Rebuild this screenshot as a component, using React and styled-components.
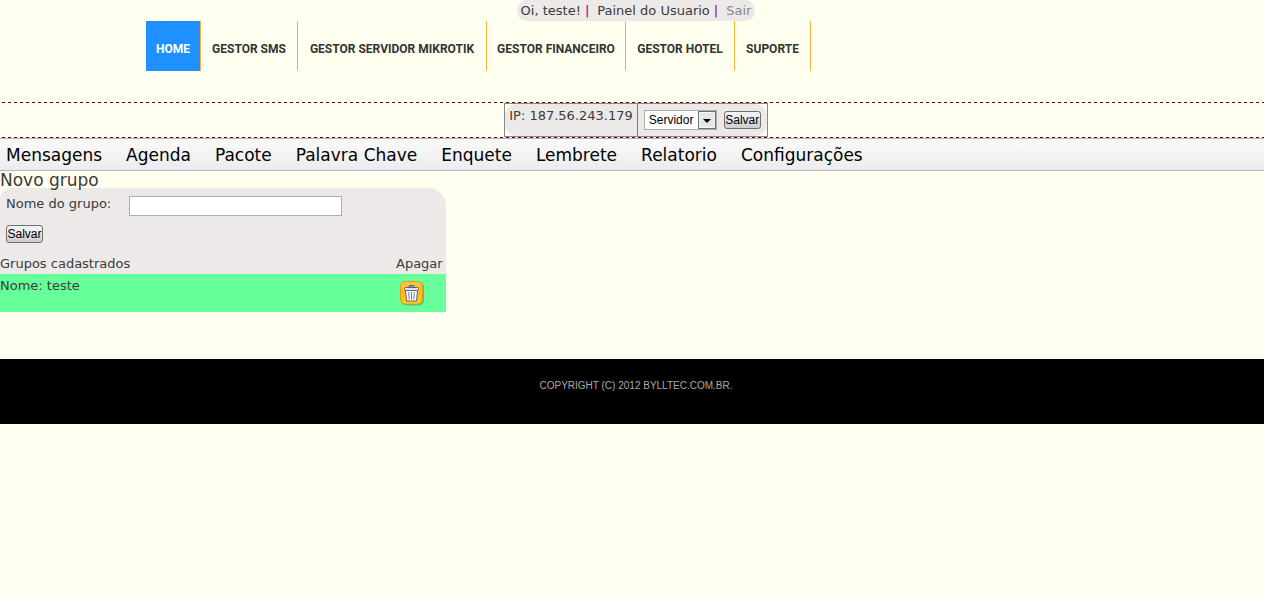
import React, { useState } from 'react';
import styled, { createGlobalStyle } from 'styled-components';

const GlobalStyle = createGlobalStyle`
  * {
    box-sizing: border-box;
  }

  body {
    margin: 0;
    background: #fffff0;
    color: #3b3b3b;
    font: 13px/16px Verdana, 'DejaVu Sans', sans-serif;
  }

  a {
    color: inherit;
    text-decoration: none;
  }
`;

const UserRow = styled.div`
  display: flex;
  justify-content: center;
  padding-left: 8px;
`;

const UserBar = styled.div`
  display: flex;
  height: 21px;
  padding: 0 4px;
  line-height: 21px;
  white-space: pre;
  background: #ede9e9;
  border-radius: 10px;
`;

const Separator = styled.span`
  padding: 0 8px 0 4px;
  color: #800080;
`;

const LogoutLink = styled.a`
  color: #888;
`;

const MainNav = styled.nav`
  display: grid;
  grid-template-columns: 55px 97px 189px 139px 109px 76px;
  padding-left: 146px;
  margin-bottom: 31px;
`;

const MainNavLink = styled.a`
  height: 50px;
  padding-top: 4px;
  border-right: 1px solid #fbb03b;
  background: ${({ $active }) => ($active ? '#1e90ff' : 'transparent')};
  color: ${({ $active }) => ($active ? '#fff' : '#333')};
  font: bold 12px/48px Roboto, sans-serif;
  text-align: center;
  white-space: nowrap;
  text-transform: uppercase;
`;

const dashes = 'repeating-linear-gradient(90deg, transparent 0 2px, #600 2px 5px, transparent 5px 6px)';

const ServerStrip = styled.div`
  display: flex;
  justify-content: center;
  padding: 1px 0 1px 8px;
  background: ${dashes} top / 100% 1px no-repeat, ${dashes} bottom / 100% 1px no-repeat;
`;

const ServerBox = styled.div`
  display: flex;
  height: 34px;
  border: 1px solid #888;
  background: #fffff0;
`;

const ServerInner = styled.div`
  display: flex;
  border-radius: 12px;
  background: #ede9e9;
`;

const IpAddress = styled.div`
  padding: 4px 4px 0;
  border-right: 1px solid #777;
`;

const ServerForm = styled.form`
  display: flex;
  align-items: center;
  gap: 7px;
  padding: 0 6px;
`;

const SelectWrap = styled.span`
  display: grid;
  grid-template-columns: 1fr 18px;
  width: 73px;
  height: 20px;
  border: 1px solid #abadb3;
  background: #fff;

  select {
    grid-area: 1 / 1 / 2 / 3;
    padding: 0 0 0 4px;
    border: 0;
    appearance: none;
    background: transparent;
    color: #000;
    font: 12px 'Liberation Sans', Arial, sans-serif;
  }

  svg {
    grid-area: 1 / 2;
    pointer-events: none;
  }
`;

const Button = styled.button`
  display: flex;
  align-items: center;
  justify-content: center;
  width: 37px;
  height: 18px;
  padding: 0;
  overflow: hidden;
  border: 1px solid #707070;
  border-radius: 3px;
  background: linear-gradient(#f2f2f2 0%, #ebebeb 50%, #ddd 50%, #cfcfcf 100%);
  color: #000;
  font: 12px 'Liberation Sans', Arial, sans-serif;
`;

const SubMenu = styled.nav`
  display: flex;
  gap: 24px;
  height: 33px;
  padding-left: 6px;
  border: solid #b4b4c4;
  border-width: 1px 0;
  background: linear-gradient(#fafafa, #ececee);
  color: #000;
  font-size: 17px;
  line-height: 32px;
`;

const Title = styled.h1`
  height: 17px;
  margin: 0;
  font-size: 17px;
  font-weight: normal;
  line-height: 19px;
`;

const GroupPanel = styled.section`
  width: 446px;
  max-width: 100%;
  margin-bottom: 47px;
  border-radius: 12px 18px 0 0;
  background: #ede9e9;
`;

const GroupForm = styled.form`
  display: grid;
  grid-template-columns: 123px 1fr;
  row-gap: 9px;
  justify-items: start;
  padding: 8px 6px 13px;

  input {
    width: 213px;
    height: 20px;
    padding: 0 3px;
    border: 1px solid #abadb3;
    background: #fff;
    font: 12px 'Liberation Sans', Arial, sans-serif;
  }
`;

const GroupTable = styled.table`
  width: 100%;
  border-collapse: collapse;

  th,
  td {
    padding: 0;
    font-weight: normal;
    text-align: left;
    vertical-align: top;
  }

  th {
    height: 18px;
  }

  th:last-child,
  td:last-child {
    width: 50px;
  }

  tbody td {
    height: 38px;
    padding-top: 4px;
    background: #6f9;
  }
`;

const DeleteButton = styled.button`
  display: block;
  margin: 2px 0 0 3px;
  padding: 0;
  border: 0;
  background: none;

  svg {
    display: block;
  }
`;

const Footer = styled.footer`
  height: 65px;
  padding: 18px 0 0 8px;
  background: #000;
  color: #aaa;
  font: 10px/18px 'Liberation Sans', Arial, sans-serif;
  text-align: center;
  text-transform: uppercase;
`;

const mainLinks = ['Home', 'Gestor SMS', 'Gestor Servidor Mikrotik', 'Gestor Financeiro', 'Gestor Hotel', 'Suporte'];
const subLinks = ['Mensagens', 'Agenda', 'Pacote', 'Palavra Chave', 'Enquete', 'Lembrete', 'Relatorio', 'Configurações'];

function SelectArrow() {
  return (
    <svg width="18" height="18" viewBox="0 0 18 18">
      <rect x="0.5" y="0.5" width="17" height="17" fill="#e6e6e6" stroke="#707070" />
      <rect x="1.5" y="1.5" width="15" height="15" fill="none" stroke="#f6f6f6" />
      <path d="M5 8h8l-4 4z" fill="#000" />
    </svg>
  );
}

function TrashIcon() {
  return (
    <svg width="26" height="26" viewBox="0 0 26 26">
      <defs>
        <linearGradient id="trash-bg" x1="0" y1="0" x2="0" y2="1">
          <stop offset="0" stopColor="#ffc84a" />
          <stop offset="0.5" stopColor="#ffb51b" />
          <stop offset="1" stopColor="#ffd11f" />
        </linearGradient>
      </defs>
      <rect x="2" y="2" width="23" height="23.5" rx="5" fill="#3f8f50" opacity="0.5" />
      <rect x="1.5" y="1.5" width="22" height="22.5" rx="5" fill="url(#trash-bg)" stroke="#e99a12" />
      <path d="M9.5 7.5l1-2h4l1 2" fill="#8d94ad" stroke="#5b6280" />
      <path d="M6.5 10.5h12l-1 10.5h-10z" fill="#fff" stroke="#5b6280" />
      <rect x="5.5" y="7.5" width="14" height="3" rx="1" fill="#dfe2ec" stroke="#5b6280" />
      <path d="M9.7 12l.5 7.5M12.5 12v7.5M15.3 12l-.5 7.5" stroke="#737b98" fill="none" />
    </svg>
  );
}

export default function App() {
  const [groupName, setGroupName] = useState('');
  const onSubmit = event => event.preventDefault();

  return (
    <>
      <GlobalStyle />
      <UserRow>
        <UserBar>
          <span>Oi, teste!</span>
          <Separator>|</Separator>
          <a href="#painel">Painel do Usuario</a>
          <Separator>|</Separator>
          <LogoutLink href="#sair">Sair</LogoutLink>
        </UserBar>
      </UserRow>
      <MainNav>
        {mainLinks.map((label, index) => (
          <MainNavLink key={label} href="#" $active={index === 0}>{label}</MainNavLink>
        ))}
      </MainNav>
      <ServerStrip>
        <ServerBox>
          <ServerInner>
            <IpAddress>IP: 187.56.243.179</IpAddress>
            <ServerForm onSubmit={onSubmit}>
              <SelectWrap>
                <select aria-label="Servidor">
                  <option>Servidor</option>
                </select>
                <SelectArrow />
              </SelectWrap>
              <Button type="submit">Salvar</Button>
            </ServerForm>
          </ServerInner>
        </ServerBox>
      </ServerStrip>
      <SubMenu>
        {subLinks.map(label => (
          <a key={label} href="#">{label}</a>
        ))}
      </SubMenu>
      <Title>Novo grupo</Title>
      <GroupPanel>
        <GroupForm onSubmit={onSubmit}>
          <label htmlFor="group-name">Nome do grupo:</label>
          <input id="group-name" type="text" value={groupName} onChange={e => setGroupName(e.target.value)} />
          <Button type="submit">Salvar</Button>
        </GroupForm>
        <GroupTable>
          <thead>
            <tr>
              <th>Grupos cadastrados</th>
              <th>Apagar</th>
            </tr>
          </thead>
          <tbody>
            <tr>
              <td>Nome: teste</td>
              <td>
                <DeleteButton type="button" aria-label="Apagar teste">
                  <TrashIcon />
                </DeleteButton>
              </td>
            </tr>
          </tbody>
        </GroupTable>
      </GroupPanel>
      <Footer>Copyright (c) 2012 bylltec.com.br.</Footer>
    </>
  );
}
